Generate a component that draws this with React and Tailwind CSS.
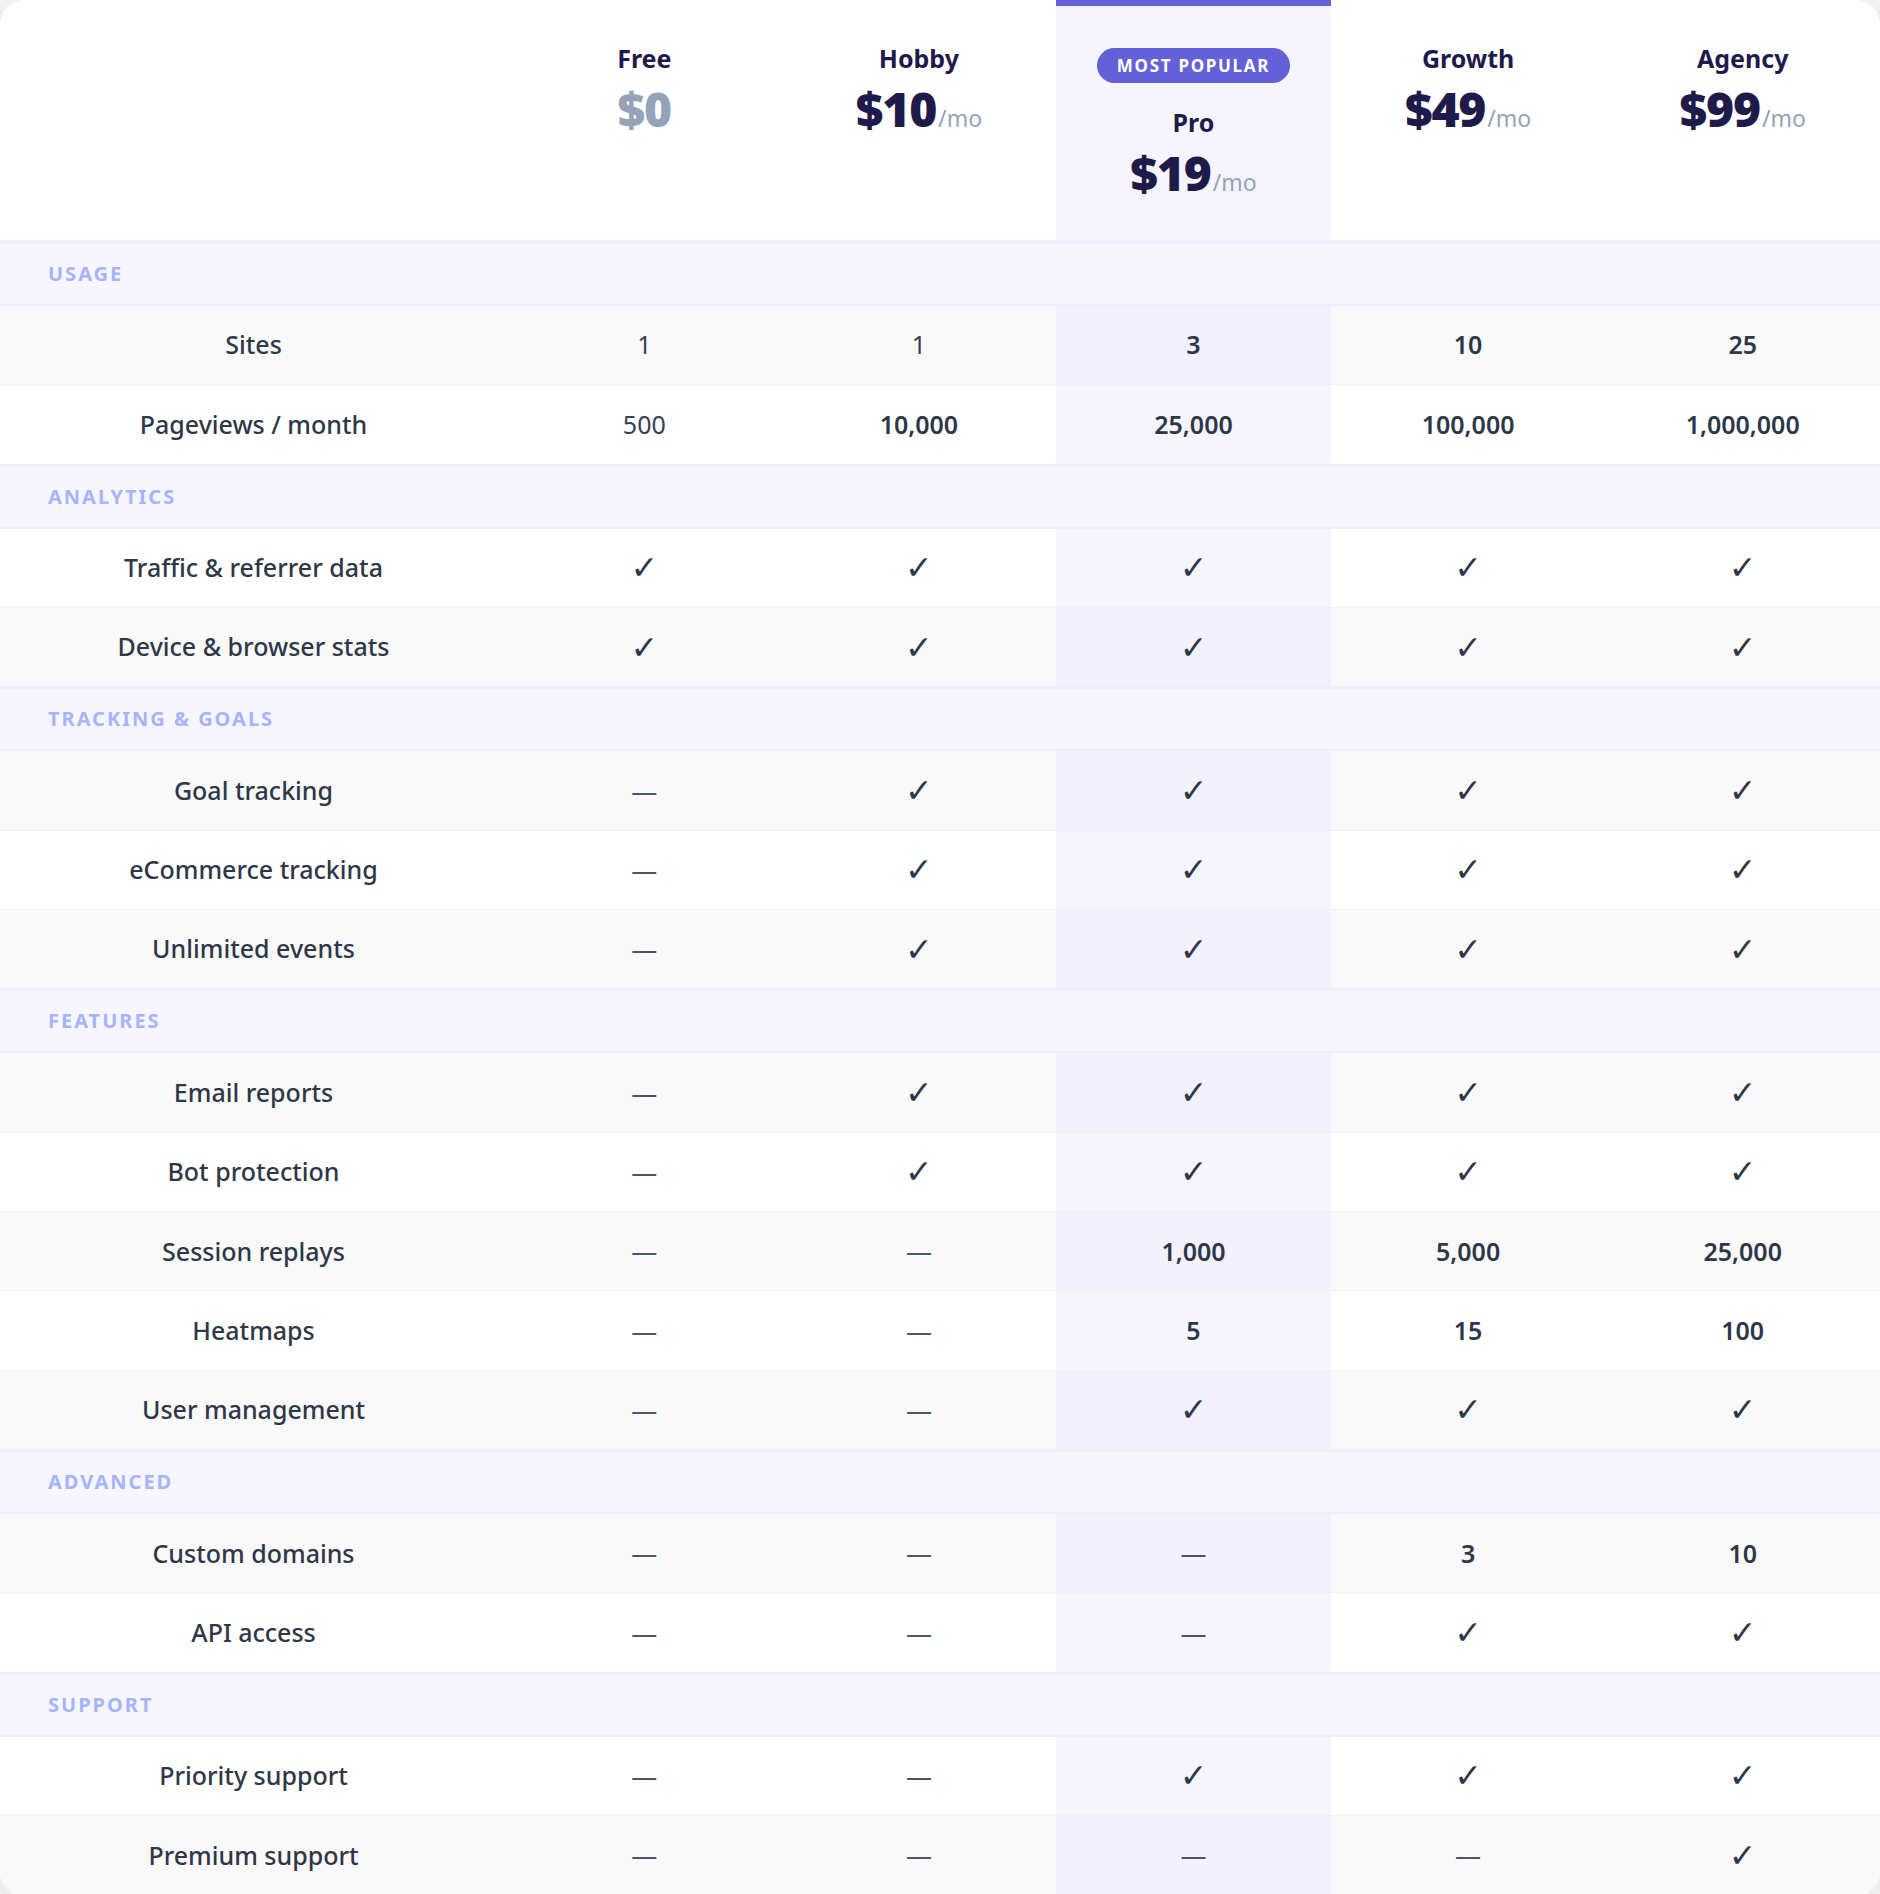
import React from 'react';

const PLANS = [
  { name: 'Free', price: '$0', free: true },
  { name: 'Hobby', price: '$10' },
  { name: 'Pro', price: '$19', popular: true },
  { name: 'Growth', price: '$49' },
  { name: 'Agency', price: '$99' },
];

// true = check, false = dash, string = bold value, { t } = regular value
const SECTIONS = [
  {
    title: 'Usage',
    rows: [
      ['Sites', [{ t: '1' }, { t: '1' }, '3', '10', '25']],
      ['Pageviews / month', [{ t: '500' }, '10,000', '25,000', '100,000', '1,000,000']],
    ],
  },
  {
    title: 'Analytics',
    rows: [
      ['Traffic & referrer data', [true, true, true, true, true]],
      ['Device & browser stats', [true, true, true, true, true]],
    ],
  },
  {
    title: 'Tracking & Goals',
    rows: [
      ['Goal tracking', [false, true, true, true, true]],
      ['eCommerce tracking', [false, true, true, true, true]],
      ['Unlimited events', [false, true, true, true, true]],
    ],
  },
  {
    title: 'Features',
    rows: [
      ['Email reports', [false, true, true, true, true]],
      ['Bot protection', [false, true, true, true, true]],
      ['Session replays', [false, false, '1,000', '5,000', '25,000']],
      ['Heatmaps', [false, false, '5', '15', '100']],
      ['User management', [false, false, true, true, true]],
    ],
  },
  {
    title: 'Advanced',
    rows: [
      ['Custom domains', [false, false, false, '3', '10']],
      ['API access', [false, false, false, true, true]],
    ],
  },
  {
    title: 'Support',
    rows: [
      ['Priority support', [false, false, true, true, true]],
      ['Premium support', [false, false, false, false, true]],
    ],
  },
];

const GRID = 'grid grid-cols-[507px_repeat(5,minmax(0,1fr))]';

function PlanHeader({ plan }) {
  return (
    <div
      className={
        plan.popular
          ? 'flex flex-col items-center border-t-[6px] border-[#6360d8] bg-[#f6f5fe] pt-[42px]'
          : 'flex flex-col items-center pt-[42px]'
      }
    >
      {plan.popular && (
        <div className="mb-[23px] flex h-[35px] items-center rounded-full bg-[#6360d8] px-[20px] text-[17px] font-bold uppercase tracking-[0.1em] text-white">
          Most popular
        </div>
      )}
      <div className="text-[25px] font-bold leading-[32px] text-[#1e1b4b]">{plan.name}</div>
      <div className="mt-[11px] flex items-baseline">
        <span
          className={
            plan.free
              ? 'text-[48px] font-black leading-none tracking-tight text-[#94a3b8]'
              : 'text-[48px] font-black leading-none tracking-tight text-[#1e1b4b]'
          }
        >
          {plan.price}
        </span>
        {!plan.free && <span className="ml-[2px] text-[23px] text-[#94a3b8]">/mo</span>}
      </div>
    </div>
  );
}

function Value({ v }) {
  if (v === true)
    return <span className="font-['DejaVu_Sans',sans-serif] text-[33px] font-bold leading-none text-[#2d3748]">✓</span>;
  if (v === false) return <span className="text-[26px] leading-none text-[#4a5568]">—</span>;
  if (typeof v === 'object') return <span className="text-[25px] text-[#374151]">{v.t}</span>;
  return <span className="text-[25px] font-semibold text-[#2d3748]">{v}</span>;
}

export default function App() {
  let n = 0;
  return (
    <div className="min-h-screen bg-[#f3f3f5] font-['Noto_Sans','Open_Sans',sans-serif]">
      <div className="overflow-hidden rounded-[24px] bg-white shadow-[0_4px_20px_rgba(15,23,42,0.06)]">
        <div className={`${GRID} h-[242px] border-b-2 border-[#eeedfb]`}>
          <div />
          {PLANS.map((p) => (
            <PlanHeader key={p.name} plan={p} />
          ))}
        </div>

        {SECTIONS.map((section) => {
          n += 1;
          return (
            <div key={section.title}>
              <div className="flex h-[64px] items-center border-y-2 border-[#efeefb] bg-[#f7f6fe] pl-[48px] text-[20px] font-bold uppercase tracking-[0.1em] text-[#a5b4fc]">
                {section.title}
              </div>
              {section.rows.map(([label, values]) => {
                n += 1;
                const gray = n % 2 === 0;
                return (
                  <div
                    key={label}
                    className={`${GRID} h-[79.35px] border-b border-[#f1f1f5] ${gray ? 'bg-[#f9f9fa]' : 'bg-white'}`}
                  >
                    <div className="flex items-center justify-center text-[25px] font-medium text-[#2f3747]">{label}</div>
                    {values.map((v, i) => (
                      <div
                        key={i}
                        className={`flex items-center justify-center ${
                          i === 2 ? (gray ? 'bg-[#f2f1fd]' : 'bg-[#f6f5fe]') : ''
                        }`}
                      >
                        <Value v={v} />
                      </div>
                    ))}
                  </div>
                );
              })}
            </div>
          );
        })}
      </div>
    </div>
  );
}
